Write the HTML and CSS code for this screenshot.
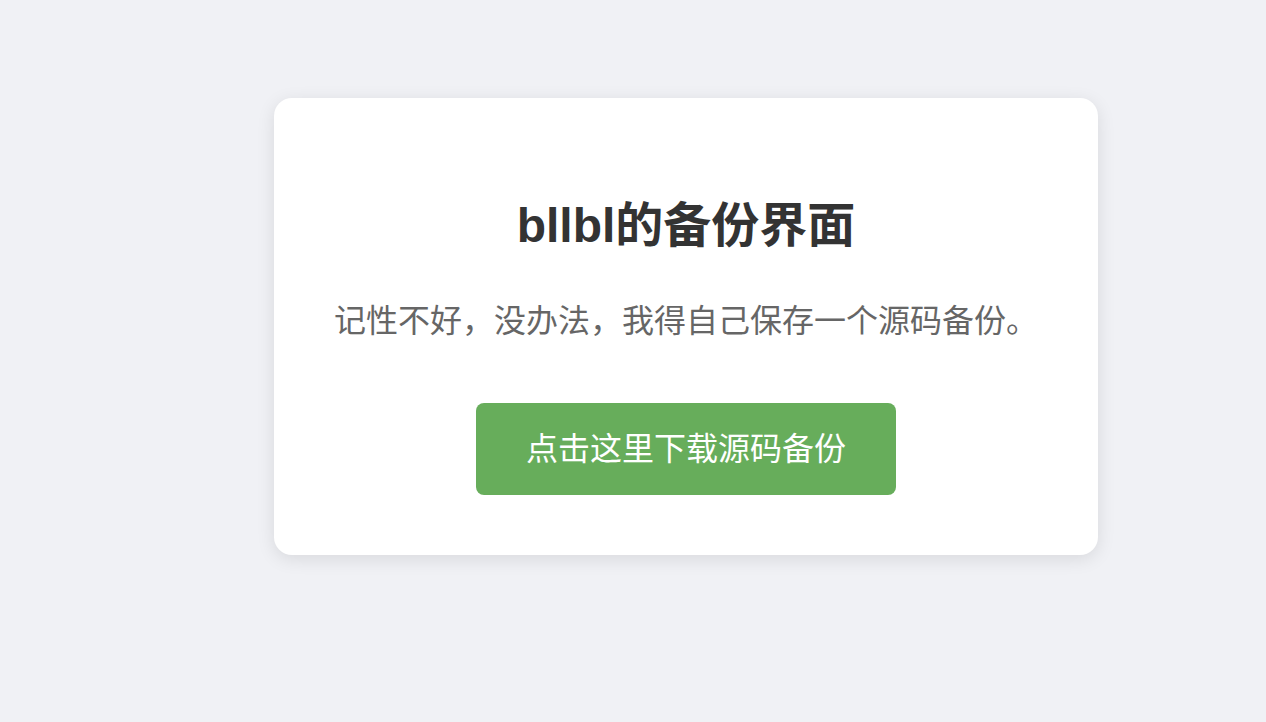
FILE: index.html
```html
<!DOCTYPE html>
<html lang="zh-CN">
<head>
<meta charset="utf-8">
<title>bllbl的备份界面</title>
<link rel="stylesheet" href="styles.css">
</head>
<body>
<div class="card">
  <h1 class="title">bllbl的备份界面</h1>
  <p class="subtitle">记性不好，没办法，我得自己保存一个源码备份。</p>
  <a class="download-btn" href="#">点击这里下载源码备份</a>
</div>
</body>
</html>
```

FILE: styles.css
```css
html, body {
  margin: 0;
  padding: 0;
}
body {
  background: #f0f1f5;
  font-family: "Liberation Sans", "Noto Sans CJK SC", sans-serif;
  min-height: 722px;
  padding-top: 98px;
  padding-left: 274px;
  box-sizing: border-box;
}
.card {
  width: 824px;
  box-sizing: border-box;
  background: #ffffff;
  border-radius: 18px;
  box-shadow: 0 4px 18px rgba(0, 0, 0, 0.1);
  padding: 60px 40px;
  display: flex;
  flex-direction: column;
  align-items: center;
  text-align: center;
}
.title {
  margin: 40px 0 0;
  font-size: 48px;
  line-height: 56px;
  font-weight: 700;
  color: #333333;
}
.subtitle {
  margin: 45px 0 0;
  font-size: 32px;
  line-height: 44px;
  color: #666666;
}
.download-btn {
  margin-top: 60px;
  display: block;
  padding: 28px 50px;
  font-size: 32px;
  line-height: 36px;
  color: #ffffff;
  background: #67ad5b;
  border-radius: 8px;
  text-decoration: none;
}
```
